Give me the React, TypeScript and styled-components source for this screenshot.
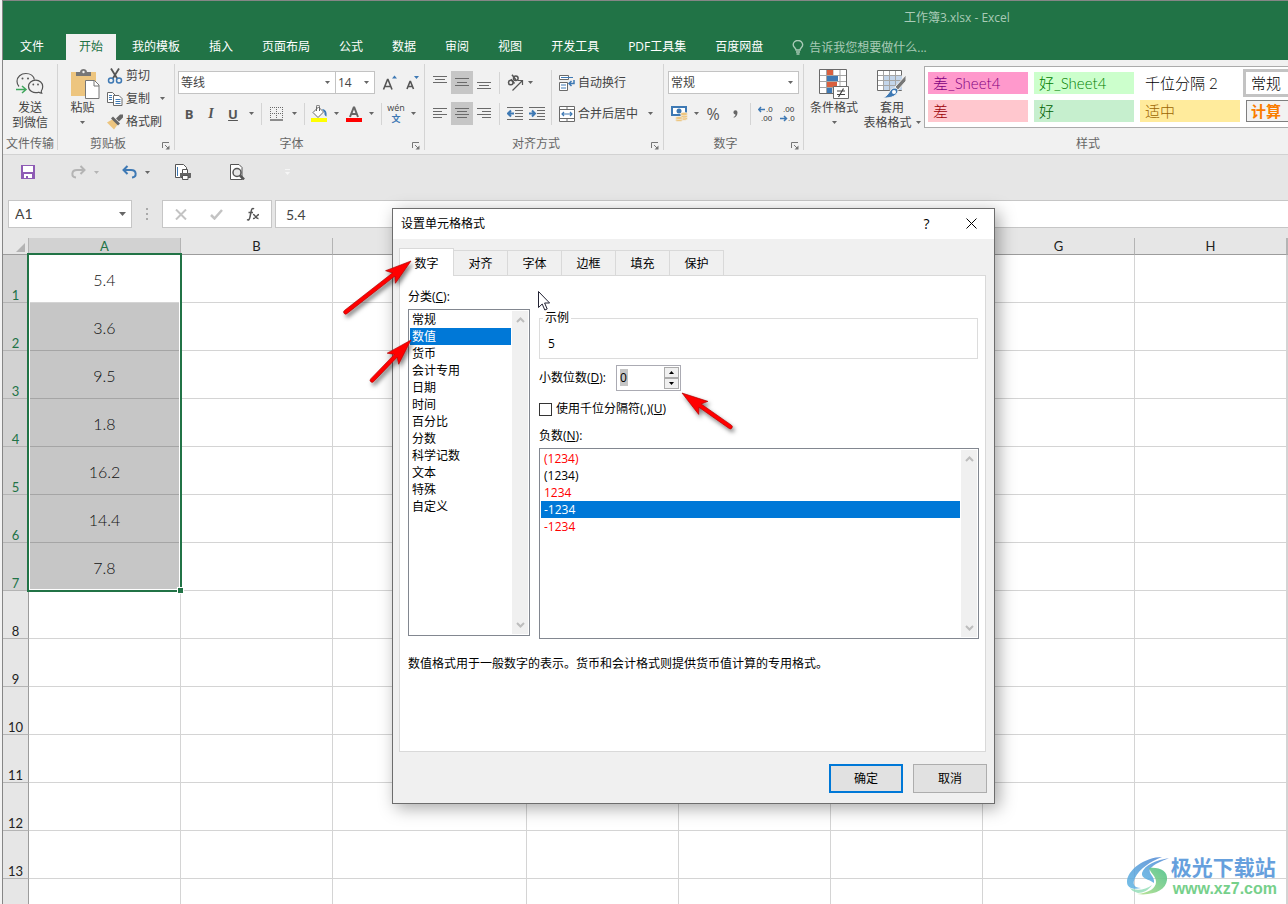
import React from 'react';
import styled, { createGlobalStyle, css } from 'styled-components';

const ui = '"Open Sans", "Noto Sans CJK SC", sans-serif';
const sheet = 'Lato, "Noto Sans CJK SC", sans-serif';
const GREEN = '#217346';
const GREY = '#6a6a6a';
const BLUE = '#3e79b4';

const GlobalStyle = createGlobalStyle`
  *, *::before, *::after { box-sizing: border-box; }
  html, body { margin: 0; background: #f3f3f3; }
  body { font: 12px/18px ${ui}; color: #444; overflow: hidden; }
  button, input, select { font: inherit; color: inherit; margin: 0; padding: 0; border: 0; border-radius: 0; background: none; outline: none; }
  svg { display: block; flex: none; }
`;

/* ---------- window ---------- */

const Window = styled.div`
  position: relative;
  display: flex;
  flex-direction: column;
  height: 100vh;
  margin-left: 2px;
  border-left: 1px solid #868686;
  overflow: hidden;
  background: #fff;
`;

const TitleBar = styled.header`
  flex: none;
  border-top: 1px solid #868686;
  background: ${GREEN};
  color: #fff;
`;

const Title = styled.div`
  height: 33px;
  padding-left: 901px;
  line-height: 33px;
  color: #a9cbb7;
  white-space: nowrap;
`;

const TabBar = styled.nav`
  display: flex;
  gap: 3px;
  height: 26px;
  white-space: nowrap;
`;

const RibbonTab = styled.button<{ $active?: boolean; $file?: boolean }>`
  flex: none;
  padding: 0 13px;
  line-height: 22px;
  ${p => p.$file && css`width: 58px; margin-right: 2px;`}
  ${p => p.$active && css`background: #f1f1f1; color: ${GREEN};`}
`;

const TellMe = styled.label`
  display: flex;
  align-items: center;
  gap: 5px;
  padding-left: 13px;
  color: #a9cbb7;
  input { width: 200px; height: 24px; }
  input::placeholder { color: #a9cbb7; opacity: 1; }
`;

/* ---------- ribbon ---------- */

const Ribbon = styled.section`
  display: flex;
  flex: none;
  padding: 4px 0;
  border-bottom: 1px solid #d2d2d2;
  background: #f1f1f1;
  overflow: hidden;
`;

const Group = styled.div<{ $width: number; $last?: boolean }>`
  display: flex;
  flex-direction: column;
  flex: none;
  width: ${p => p.$width}px;
  border-right: ${p => (p.$last ? 0 : 1)}px solid #d4d4d4;
  white-space: nowrap;
`;

const GroupBody = styled.div`
  display: flex;
  height: 74px;
`;

const GroupFoot = styled.div`
  display: flex;
  height: 12px;
  line-height: 12px;
  color: #666;
  text-align: center;
  span { flex: 1; }
`;

const Launcher = styled.button`
  width: 16px;
  height: 12px;
  padding: 4px 0 0 4px;
`;

const BigButton = styled.button<{ $width: number }>`
  display: flex;
  flex-direction: column;
  align-items: center;
  flex: none;
  width: ${p => p.$width}px;
  padding-top: 4px;
  line-height: 15px;
`;

const BigIcon = styled.span`
  display: flex;
  align-items: center;
  justify-content: center;
  height: 32px;
`;

const CaretLine = styled.span`
  display: flex;
  align-items: center;
  gap: 4px;
  height: 15px;
`;

const Stack = styled.div`
  display: flex;
  flex-direction: column;
`;

const Rows = styled.div<{ $left?: number }>`
  display: flex;
  flex-direction: column;
  gap: 8px;
  padding: 7px 0 0 ${p => p.$left ?? 3}px;
`;

const Row = styled.div`
  display: flex;
  align-items: center;
  height: 23px;
`;

const ToolButton = styled.button<{ $on?: boolean }>`
  display: flex;
  align-items: center;
  justify-content: center;
  width: 22px;
  height: 23px;
  background: ${p => (p.$on ? '#c6c6c6' : 'none')};
`;

const Glyph = styled.span<{ $kind?: 'bold' | 'italic' | 'underline' | 'big' }>`
  font-size: 13px;
  color: #555;
  ${p => p.$kind === 'bold' && css`font-weight: 700;`}
  ${p => p.$kind === 'italic' && css`font: italic 700 14px "Liberation Serif", serif;`}
  ${p => p.$kind === 'underline' && css`font-weight: 700; text-decoration: underline;`}
  ${p => p.$kind === 'big' && css`font-size: 16px;`}
`;

const CaretButton = styled.button<{ $width?: number }>`
  display: flex;
  align-items: center;
  justify-content: center;
  width: ${p => p.$width ?? 14}px;
  height: 23px;
`;

const TextButton = styled.button`
  display: flex;
  align-items: center;
  gap: 3px;
  height: 23px;
`;

const Sep = styled.span<{ $margin?: number; $tall?: boolean }>`
  flex: none;
  width: 1px;
  height: ${p => (p.$tall ? '55px' : '22px')};
  margin: ${p => (p.$tall ? '6px' : 0)} ${p => p.$margin ?? 3}px 0;
  background: #d4d4d4;
`;

const SelectBox = styled.label<{ $width: number }>`
  display: flex;
  align-items: center;
  width: ${p => p.$width}px;
  height: 23px;
  padding: 0 5px 0 2px;
  border: 1px solid #c3c3c3;
  background: #fff;
  & + & { margin: 0 3px 0 -1px; }
  select { flex: 1; min-width: 0; appearance: none; }
`;

const Gallery = styled.div`
  display: grid;
  grid-template-columns: repeat(4, 100px);
  grid-auto-rows: 22px;
  gap: 6px;
  align-self: flex-start;
  margin: 2px 0 0 4px;
  padding: 5px 3px 5px;
  border: 1px solid #ababab;
  background: #fff;
`;

const StyleCell = styled.button<{ $bg: string; $fg: string; $picked?: boolean; $calc?: boolean }>`
  padding: 0 5px;
  font: 300 15px/20px ${sheet};
  text-align: left;
  background: ${p => p.$bg};
  color: ${p => p.$fg};
  ${p => p.$picked && css`outline: 3px solid #c3c3c3;`}
  ${p => p.$calc && css`border: 1px solid #7f7f7f; padding: 0 4px; font-weight: 700; line-height: 18px;`}
`;

/* ---------- quick access and formula bar ---------- */

const Bars = styled.section`
  flex: none;
  background: #e6e6e6;
`;

const QuickBar = styled.div`
  display: flex;
  align-items: center;
  height: 34px;
  padding-left: 12px;
`;

const QuickButton = styled.button<{ $gap?: number }>`
  display: flex;
  align-items: center;
  justify-content: center;
  width: 26px;
  height: 24px;
  margin-left: ${p => p.$gap ?? 0}px;
`;

const FormulaBar = styled.div`
  display: flex;
  padding: 11px 0 10px 5px;
  font: 14px/26px ${sheet};
`;

const NameBox = styled.label`
  display: flex;
  align-items: center;
  width: 124px;
  height: 28px;
  padding: 0 5px 0 6px;
  border: 1px solid #c6c6c6;
  background: #fff;
  input { flex: 1; min-width: 0; }
`;

const Dots = styled.span`
  display: flex;
  align-items: center;
  justify-content: center;
  width: 30px;
`;

const FormulaTools = styled.div`
  display: flex;
  align-items: center;
  justify-content: space-around;
  width: 110px;
  height: 28px;
  border: 1px solid #c6c6c6;
  background: #fff;
`;

const FormulaInput = styled.input`
  flex: 1;
  height: 28px;
  margin-left: 3px !important;
  padding: 0 10px !important;
  border: 1px solid #c6c6c6 !important;
  border-right: 0 !important;
  background: #fff !important;
`;

/* ---------- sheet ---------- */

const SheetArea = styled.main`
  position: relative;
  flex: 1;
  min-height: 0;
  margin-top: -1px;
  padding-top: 1px;
  overflow: hidden;
`;

const Table = styled.table`
  width: 100%;
  table-layout: fixed;
  border-collapse: separate;
  border-spacing: 0;
  font-family: ${sheet};
  color: #111;
  th, td { padding: 0; }
  th { font-weight: 400; font-size: 13px; }
`;

const ColHead = styled.th<{ $on?: boolean }>`
  height: 17px;
  line-height: 16px;
  border-right: 1px solid #b4b4b4;
  border-bottom: 1px solid #9c9c9c;
  background: ${p => (p.$on ? '#d2d2d2' : '#e6e6e6')};
  color: ${p => (p.$on ? GREEN : '#222')};
`;

const Corner = styled(ColHead)`
  svg { margin: 3px 0 0 13px; }
`;

const RowHead = styled.th<{ $on?: boolean }>`
  height: 48px;
  vertical-align: bottom;
  line-height: 13px;
  border-right: 1px solid #9c9c9c;
  border-bottom: 1px solid #b4b4b4;
  background: ${p => (p.$on ? '#d2d2d2' : '#e6e6e6')};
  color: ${p => (p.$on ? GREEN : '#222')};
`;

const Cell = styled.td<{ $on?: boolean }>`
  && { padding-top: 2px; }
  height: 48px;
  border-right: 1px solid #d4d4d4;
  border-bottom: 1px solid ${p => (p.$on ? '#a5a5a5' : '#d4d4d4')};
  background: ${p => (p.$on ? '#c6c6c6' : '#fff')};
  font-size: 16px;
  font-weight: 300;
  text-align: center;
`;

const Selection = styled.div`
  position: absolute;
  left: 24px;
  top: 16px;
  width: 155px;
  height: 339px;
  border: 2px solid ${GREEN};
  box-shadow: inset 0 0 0 1px #fff;
  &::after {
    content: '';
    position: absolute;
    right: -4px;
    bottom: -4px;
    width: 7px;
    height: 7px;
    border: 1px solid #fff;
    background: ${GREEN};
  }
`;

/* ---------- dialog ---------- */

const Dialog = styled.section`
  position: absolute;
  left: 389px;
  top: 208px;
  width: 603px;
  border: 1px solid #6d6d6d;
  background: #f0f0f0;
  box-shadow: 4px 4px 16px rgba(0, 0, 0, 0.35);
  color: #000;
`;

const DialogTitle = styled.div`
  display: flex;
  height: 30px;
  padding-left: 8px;
  line-height: 30px;
  background: #fff;
  h1 { flex: 1; margin: 0; font: inherit; }
`;

const TitleButton = styled.button`
  display: flex;
  align-items: center;
  justify-content: center;
  width: 45px;
  height: 29px;
  font-size: 14px;
`;

const DialogTabs = styled.div`
  display: flex;
  align-items: flex-end;
  padding: 9px 6px 0;
`;

const DialogTab = styled.button<{ $active?: boolean }>`
  width: 54px;
  height: 25px;
  padding-top: 2px;
  border: solid #d9d9d9;
  border-width: 1px 1px 0 0;
  ${p => p.$active && css`
    position: relative;
    z-index: 1;
    width: 55px;
    height: 28px;
    margin-bottom: -1px;
    border-left-width: 1px;
    background: #fff;
  `}
`;

const Panel = styled.div`
  min-height: 477px;
  margin: 0 8px 0 6px;
  padding: 12px 6px 12px 8px;
  border: 1px solid #d9d9d9;
  background: #fff;
`;

const Columns = styled.div`
  display: flex;
  gap: 9px;
`;

const CategoryColumn = styled.div`
  width: 122px;
`;

const DetailColumn = styled.div`
  flex: 1;
  padding-top: 21px;
`;

const Caption = styled.div`
  margin-bottom: 3px;
`;

const ListFrame = styled.div<{ $height: number }>`
  display: flex;
  height: ${p => p.$height}px;
  padding: 1px;
  border: 1px solid #828790;
`;

const List = styled.ul`
  flex: 1;
  margin: 0 1px 0 0;
  padding: 0;
  list-style: none;
`;

const Option = styled.li<{ $on?: boolean; $red?: boolean; $wide?: boolean }>`
  height: 17px;
  padding-left: ${p => (p.$wide ? 3 : 2)}px;
  line-height: 17px;
  background: ${p => (p.$on ? '#0078d7' : 'none')};
  color: ${p => (p.$on ? '#fff' : p.$red ? '#f00' : '#000')};
`;

const Track = styled.div`
  display: flex;
  flex-direction: column;
  justify-content: space-between;
  align-items: center;
  width: 16px;
  padding: 6px 0;
  background: #f0f0f0;
`;

const Sample = styled.fieldset`
  height: 50px;
  margin: 0 1px 0 0;
  padding: 8px 0 0 3px;
  border: 1px solid #dcdcdc;
  legend { height: 18px; padding: 0 2px; }
  output { display: block; padding-left: 5px; }
`;

const Places = styled.div`
  display: flex;
  align-items: center;
  gap: 10px;
  height: 26px;
  margin-top: 6px;
`;

const Spinner = styled.span`
  display: flex;
  width: 65px;
  height: 26px;
  padding: 1px;
  border: 1px solid #ababb3;
`;

const SpinValue = styled.input`
  width: 8px;
  height: 17px;
  margin: 2px 36px 0 2px !important;
  background: #c6c6c6 !important;
`;

const SpinButtons = styled.span`
  display: flex;
  flex-direction: column;
  width: 15px;
  button {
    display: flex;
    align-items: center;
    justify-content: center;
    width: 15px;
    height: 11px;
    border: 1px solid #ababab;
    background: #f0f0f0;
  }
`;

const CheckLine = styled.label`
  display: flex;
  align-items: center;
  gap: 4px;
  height: 18px;
  margin: 9px 0;
  input { appearance: none; width: 13px; height: 13px; border: 1px solid #333; background: #fff; }
`;

const Note = styled.p`
  margin: 16px 0 0;
`;

const Actions = styled.div`
  display: flex;
  justify-content: flex-end;
  gap: 10px;
  padding: 12px 7px 10px;
`;

const ActionButton = styled.button<{ $primary?: boolean }>`
  width: 74px;
  height: 29px;
  border: ${p => (p.$primary ? '2px solid #0078d7' : '1px solid #adadad')};
  background: #e1e1e1;
`;

/* ---------- overlays ---------- */

const Annotations = styled.svg`
  position: absolute;
  z-index: 2;
  left: 337px;
  top: 240px;
  pointer-events: none;
`;

const Watermark = styled.div`
  position: absolute;
  right: 11px;
  bottom: 6px;
  display: flex;
  align-items: center;
  gap: 1px;
`;

const MarkName = styled.div`
  font: 700 21px/25px "Noto Sans CJK SC", sans-serif;
  color: #66a0dd;
`;

const MarkUrl = styled.div`
  padding-left: 2px;
  font: 700 16px/19px "Liberation Sans", sans-serif;
  color: #76d08b;
`;

/* ---------- icons ---------- */

const Caret = ({ color = '#666', big = false }: { color?: string; big?: boolean }) => (
  <svg width={big ? 7 : 5} height={big ? 4 : 3} viewBox="0 0 5 3" preserveAspectRatio="none"><path d="M0 0h5L2.500 3z" fill={color} /></svg>
);

const Chevron = ({ down }: { down?: boolean }) => (
  <svg width="9" height="6" viewBox="0 0 9 6" fill="none" stroke="#bdbdbd" strokeWidth="2">
    <path d={down ? 'M1 1l3.500 3.500L8 1' : 'M1 5l3.500-3.500L8 5'} />
  </svg>
);

const LaunchIcon = () => (
  <svg width="8" height="8" viewBox="0 0 8 8" fill="none" stroke="#777">
    <path d="M.5 6V.5H7M3 3l3 3" /><path d="M7.500 3.500v4h-4z" fill="#777" stroke="none" />
  </svg>
);

const BulbIcon = () => (
  <svg width="12" height="15" viewBox="0 0 12 15" fill="none" stroke="#a9cbb7" strokeWidth="1.400">
    <path d="M4 10c0-2-2.800-2.600-2.800-5.200a4.700 4.300 0 0 1 9.500 0C10.700 7.400 8 8 8 10zM4 12h4M4.500 14h3" />
  </svg>
);

const WeChatIcon = () => (
  <svg width="28" height="24" viewBox="0 0 28 24" fill="none" stroke="#555" strokeWidth="1.200">
    <path d="M3 14.500C1.600 13 1 11.300 1 9.300 1 4.700 5 1.500 9.800 1.500c4.600 0 8 2.700 8.600 6.200" />
    <path d="M25.500 18.500c-.4.600-.3 1.500.2 2.700-1.400-.2-2.200-.6-2.900-1-5.400 1.700-10.300-1.400-10.300-5.700 0-3.700 3.200-6.300 7.200-6.300s7 2.700 7 6.200c0 1.600-.4 3-1.200 4.100z" />
    <g fill="#555" stroke="none"><circle cx="6.500" cy="6.500" r="1" /><circle cx="12" cy="6.500" r="1" /><circle cx="17.300" cy="12.500" r=".9" /><circle cx="22" cy="12.500" r=".9" /></g>
    <path d="M0 17.500h9M6 14l4 3.500L6 21" stroke="#3fa65c" strokeWidth="1.500" />
  </svg>
);

const PasteIcon = () => (
  <svg width="34" height="30" viewBox="-5 0 34 30">
    <path d="M0 3h25v24H0z" fill="#edc57f" />
    <path d="M5 7V3h4c0-4 7-4 7 0h4v4z" fill="#777" /><circle cx="12.500" cy="3" r="1.200" fill="#f1f1f1" />
    <path d="M14.500 11.500h9l4.500 4.500v13.500H14.500z" fill="#fff" stroke="#777" />
    <path d="M23 11.500V17h5" fill="none" stroke="#777" />
  </svg>
);

const CutIcon = () => (
  <svg width="16" height="16" viewBox="0 0 16 16" fill="none">
    <path d="M4 .5 10.500 11M12 .5 5.500 11" stroke="#555" strokeWidth="1.800" />
    <circle cx="4" cy="12.500" r="2.500" stroke={BLUE} strokeWidth="1.500" /><circle cx="12" cy="12.500" r="2.500" stroke={BLUE} strokeWidth="1.500" />
  </svg>
);

const CopyIcon = () => (
  <svg width="16" height="16" viewBox="0 0 16 16" fill="#fff" stroke={GREY}>
    <path d="M.5 1.500h5L8.500 4.500v7h-8z" /><path d="M2 4.500h3M2 6.500h3M2 8.500h3" stroke={BLUE} />
    <path d="M6.500 4.500h5.500l3 3v7h-8.500z" /><path d="M8.500 8.500h5M8.500 10.500h5M8.500 12.500h5" stroke={BLUE} />
  </svg>
);

const BrushIcon = () => (
  <svg width="16" height="16" viewBox="0 0 16 16">
    <path d="M0 8.500 6 5l5 5-4 5.500z" fill="#edc57f" />
    <path d="M6 2.500l7 7-2 2-7-7z" fill="#666" /><path d="M9 4.500 13 .5h3v3l-4 4z" fill="#666" />
  </svg>
);

const GrowIcon = ({ small }: { small?: boolean }) => (
  <svg width="15" height="16" viewBox="0 0 15 16">
    <path d={small ? 'M3 14 6 6.500h.5L9.500 14M4.200 11.500h4' : 'M1.500 14.500 5.500 4.500h.5l4 10M3 11.500h5.500'} fill="none" stroke="#555" strokeWidth="1.600" />
    <path d={small ? 'M10 1h5l-2.500 3z' : 'M10 3.500h5L12.500.5z'} fill={BLUE} />
  </svg>
);

const BorderIcon = () => (
  <svg width="13" height="14" viewBox="0 0 13 14" fill="none" stroke={GREY}>
    <path d="M0 .5h13M0 6.500h13M.5 0v12M6.500 0v12M12.500 0v12" strokeDasharray="1 1" /><path d="M0 13h13" strokeWidth="1.500" />
  </svg>
);

const FillIcon = () => (
  <svg width="16" height="17" viewBox="0 0 16 17">
    <path d="M2 7.500 7.500 2l5 5L7 12.500z" fill="#fff" stroke={GREY} /><path d="M5.500 6V1.500a1.500 1.500 0 0 1 3 0V6" fill="none" stroke={GREY} />
    <path d="M11 4c4 .5 5 3 4.500 7.500-1.500-.5-2.500-2-2-4z" fill={BLUE} /><path d="M0 13h16v4H0z" fill="#ff0" />
  </svg>
);

const FontColorIcon = () => (
  <svg width="16" height="17" viewBox="0 0 16 17">
    <path d="M4 12 7.700 2.500h.6L12 12M5.500 9h5" fill="none" stroke="#666" strokeWidth="2" /><path d="M0 13h16v4H0z" fill="red" />
  </svg>
);

const Pinyin = styled.span`
  display: flex;
  flex-direction: column;
  align-items: center;
  font: 9px/10px ${ui};
  color: #444;
  b { font: 700 9px/11px "Noto Sans CJK SC", sans-serif; color: ${BLUE}; }
`;

const Lines = ({ d }: { d: string }) => (
  <svg width="14" height="13" viewBox="0 0 14 13" stroke={GREY} fill="none"><path d={d} /></svg>
);

const IndentIcon = ({ right }: { right?: boolean }) => (
  <svg width="16" height="13" viewBox="0 0 16 13" fill="none" stroke={GREY}>
    <path d="M0 .5h16M8 3.500h8M8 6.500h8M8 9.500h8M0 12.500h16" />
    <path d={right ? 'M0 6.500h5M3 3.500l3 3-3 3' : 'M7 6.500H2M4 3.500l-3 3 3 3'} stroke={BLUE} strokeWidth="2" />
  </svg>
);

const OrientIcon = () => (
  <svg width="17" height="17" viewBox="0 0 17 17" fill="none" stroke="#555" strokeWidth="1.500">
    <circle cx="3.800" cy="8.500" r="2.300" /><path d="M4 5.200 7.500 9.500" />
    <path d="M5 .8 9 6" /><circle cx="8.800" cy="4.200" r="2.300" /><path d="M5.500 16.500 15 7M11 6.500h4.500V11" strokeWidth="1.200" />
  </svg>
);

const WrapIcon = () => (
  <svg width="16" height="16" viewBox="0 0 16 16" fill="none" stroke={GREY}>
    <path d="M.5.5h9v4H.5zM.5 7.500h8v8H.5z" fill="#fff" /><path d="M2 2.500h12M2 10h5M2 13h5" stroke={BLUE} />
    <path d="M15 5v3.500h-4M12.500 6l-2.500 2.500 2.500 2.500" stroke={BLUE} strokeWidth="1.500" />
  </svg>
);

const MergeIcon = () => (
  <svg width="16" height="16" viewBox="0 0 16 16" fill="none" stroke={GREY}>
    <path d="M.5.500h15v15H.5zM.5 3.500h15M.5 12.500h15M8 .5v3M8 12.500v3" fill="#fff" />
    <path d="M3 8h10M5 6 3 8l2 2M11 6l2 2-2 2" stroke={BLUE} strokeWidth="1.200" />
  </svg>
);

const MoneyIcon = () => (
  <svg width="17" height="16" viewBox="0 0 17 16">
    <path d="M1 1h14v8H1z" fill="#fff" stroke={BLUE} strokeWidth="2" /><circle cx="8" cy="5" r="2.500" fill={BLUE} />
    <g fill="#edc57f" stroke="#f1f1f1" strokeWidth=".6"><ellipse cx="13" cy="12.500" rx="3.500" ry="1.800" /><ellipse cx="13" cy="10.300" rx="3.500" ry="1.800" /><ellipse cx="13" cy="8" rx="3.500" ry="1.800" /><ellipse cx="8" cy="14" rx="3.500" ry="1.600" /><ellipse cx="8" cy="12" rx="3.500" ry="1.600" /></g>
  </svg>
);

const DecimalIcon = ({ less }: { less?: boolean }) => (
  <svg width="16" height="20" viewBox="0 0 16 20" fontFamily="Liberation Sans, sans-serif" fontSize="8" fill="#333">
    <text x={less ? 3 : 8} y="8">{less ? '.00' : '.0'}</text><text x={less ? 8 : 3} y="17">{less ? '.0' : '.00'}</text>
    <path d={less ? 'M0 14.500h6M4 12l2.500 2.500L4 17' : 'M7 5.500H1M3 3 .7 5.500 3 8'} fill="none" stroke={BLUE} strokeWidth="1.500" />
  </svg>
);

const CondIcon = () => (
  <svg width="31" height="31" viewBox="0 0 31 31">
    <path d="M.5.5h27v24H.5z" fill="#fff" stroke={GREY} />
    <path d="M7.500 1v23M14 1v23M21 1v23M1 6.500h26M1 12.500h26M1 18.500h26" stroke="#a5a5a5" />
    <path d="M8 1h6v5H8zM8 13h10v5H8z" fill="#d9603f" /><path d="M8 7h11v5H8zM8 19h5v5H8z" fill={BLUE} />
    <path d="M14.500 17.500h15v12h-15z" fill="#fff" stroke={GREY} /><path d="M18 22h8M18 25.500h8M24.500 19.500l-5 8.500" stroke="#444" strokeWidth="1.200" />
  </svg>
);

const TableIcon = () => (
  <svg width="30" height="29" viewBox="0 0 30 29">
    <path d="M.5.5h24v20H.5z" fill="#fff" stroke={GREY} /><path d="M7 6h18v14H7z" fill="#c3d5ea" />
    <path d="M6.500 1v19M12.500 1v19M18.500 1v19M1 5.500h24M1 10.500h24M1 15.500h24" stroke="#a5a5a5" />
    <path d="M29 5v6l-8 9-3-3z" fill="#777" stroke="#f1f1f1" /><path d="M18 18c3 0 4 3 1.500 6C16 28 10 28 6 28c4-2 5-4 7-7 1-2 3-3 5-3z" fill={BLUE} stroke="#f1f1f1" />
    <circle cx="17" cy="22" r="2" fill="#fff" />
  </svg>
);

const SaveIcon = () => (
  <svg width="14" height="14" viewBox="0 0 14 14"><path d="M0 0h14v14H0z" fill="#8e5bb5" /><path d="M2 1h10v6H2zM3 9h8v4H3z" fill="#fff" /><path d="M5 11h2v3H5z" fill="#8e5bb5" /></svg>
);

const UndoIcon = ({ redo }: { redo?: boolean }) => (
  <svg width="15" height="14" viewBox="0 0 15 14" fill="none" stroke={redo ? '#b4b4b4' : BLUE} strokeWidth="2">
    <path d={redo ? 'M14 5H6C0 5 0 12 5 12.500M9.500 1l4 4-4 4' : 'M1 5h8c6 0 6 7 1 7.500M5.500 1l-4 4 4 4'} />
  </svg>
);

const PrintIcon = () => (
  <svg width="17" height="16" viewBox="0 0 17 16" fill="none" stroke="#555">
    <path d="M5 13.500H.5V.5h8l3 3V5" fill="#fff" /><path d="M2.500 3v9" stroke={BLUE} />
    <path d="M7.500 9V5.500h5V9M5.500 9.500h10v4h-10z" fill="#fff" /><path d="M5 9h11v4H5z" fill="#666" stroke="none" /><path d="M7.500 11.500h5.500v4H7.500z" fill="#fff" />
  </svg>
);

const PreviewIcon = () => (
  <svg width="15" height="16" viewBox="0 0 15 16" fill="none" stroke="#555">
    <path d="M.5.5h8.500l3 3v12H.5z" fill="#fff" /><circle cx="7" cy="8.500" r="4" fill="#e6e6e6" strokeWidth="1.500" /><path d="m10 11.500 4 4" strokeWidth="2.500" />
  </svg>
);

const SwirlIcon = () => (
  <svg width="43" height="40" viewBox="0 0 43 40">
    <defs>
      <linearGradient id="swirl" x1="0" y1="1" x2="1" y2="0"><stop offset="0" stopColor="#5cb4e2" /><stop offset="1" stopColor="#4f86d2" /></linearGradient>
      <linearGradient id="leaf" x1="0" y1="1" x2="1" y2="0"><stop offset="0" stopColor="#b4e08a" /><stop offset="1" stopColor="#4cc08a" /></linearGradient>
    </defs>
    <path d="M35 1C18 1 0 14 0 26c0 6 6 8 14 6-7 0-9-4-6-10C12 13 24 5 35 1z" fill="url(#swirl)" opacity=".85" />
    <path d="M42 2C30 4 17 9 15 17c-1 6 7 6 12 10 1-7-6-9-4-14C27 8 35 5 42 2z" fill="url(#swirl)" opacity=".85" />
    <path d="M22 12c11-1 19 3 18 12-1 10-14 16-30 14 12-1 19-6 19-12S24 18 22 12z" fill="url(#leaf)" opacity=".9" />
    <path d="M3 32c6 3 16 2 22-3-3 5-9 8-14 8-4-1-7-3-8-5z" fill="#8fdcb4" opacity=".8" />
  </svg>
);

/* ---------- data ---------- */

const ribbonTabs = ['开始', '我的模板', '插入', '页面布局', '公式', '数据', '审阅', '视图', '开发工具', 'PDF工具集', '百度网盘'];
const values = ['5.4', '3.6', '9.5', '1.8', '16.2', '14.4', '7.8'];
const columns = [['A', 152], ['B', 152], ['C', 194], ['D', 152], ['E', 152], ['F', 152], ['G', 152], ['H', 152]] as const;
const rowLabels = ['1', '2', '3', '4', '5', '6', '7', '8', '9', '10', '11', '12', '13', ''];
const categories = ['常规', '数值', '货币', '会计专用', '日期', '时间', '百分比', '分数', '科学记数', '文本', '特殊', '自定义'];
const negatives = [
  { text: '(1234)', red: true }, { text: '(1234)' }, { text: '1234', red: true }, { text: '-1234', on: true }, { text: '-1234', red: true },
];
const styles = [
  { name: '差_Sheet4', bg: '#ff99cc', fg: '#800080' }, { name: '好_Sheet4', bg: '#ccffcc', fg: '#008000' },
  { name: '千位分隔 2', bg: '#fff', fg: '#000' }, { name: '常规', bg: '#fff', fg: '#000', picked: true },
  { name: '差', bg: '#ffc7ce', fg: '#9c0006' }, { name: '好', bg: '#c6efce', fg: '#006100' },
  { name: '适中', bg: '#ffeb9c', fg: '#9c6500' }, { name: '计算', bg: '#f2f2f2', fg: '#fa7d00', calc: true },
];

const Foot = ({ label, launch = true }: { label: string; launch?: boolean }) => (
  <GroupFoot><span>{label}</span>{launch && <Launcher aria-label={label}><LaunchIcon /></Launcher>}</GroupFoot>
);

const RibbonGroups = () => (
  <Ribbon>
    <Group $width={55}>
      <GroupBody><BigButton $width={54}><BigIcon><WeChatIcon /></BigIcon><span>发送</span><span>到微信</span></BigButton></GroupBody>
      <Foot label="文件传输" launch={false} />
    </Group>

    <Group $width={117}>
      <GroupBody>
        <BigButton $width={49}><BigIcon><PasteIcon /></BigIcon><span>粘贴</span><CaretLine><Caret /></CaretLine></BigButton>
        <Stack>
          <TextButton><CutIcon />剪切</TextButton>
          <Row><TextButton><CopyIcon />复制</TextButton><CaretButton $width={24} aria-label="复制选项"><Caret /></CaretButton></Row>
          <TextButton><BrushIcon />格式刷</TextButton>
        </Stack>
      </GroupBody>
      <Foot label="剪贴板" />
    </Group>

    <Group $width={250}>
      <GroupBody>
        <Rows>
          <Row>
            <SelectBox $width={158}><select aria-label="字体"><option>等线</option></select><Caret /></SelectBox>
            <SelectBox $width={40}><select aria-label="字号"><option>14</option></select><Caret /></SelectBox>
            <ToolButton aria-label="增大字号"><GrowIcon /></ToolButton>
            <ToolButton aria-label="减小字号"><GrowIcon small /></ToolButton>
          </Row>
          <Row>
            <ToolButton><Glyph $kind="bold">B</Glyph></ToolButton>
            <ToolButton><Glyph $kind="italic">I</Glyph></ToolButton>
            <ToolButton><Glyph $kind="underline">U</Glyph></ToolButton>
            <CaretButton aria-label="下划线选项"><Caret /></CaretButton>
            <Sep />
            <ToolButton aria-label="边框"><BorderIcon /></ToolButton>
            <CaretButton aria-label="边框选项"><Caret /></CaretButton>
            <Sep />
            <ToolButton aria-label="填充颜色"><FillIcon /></ToolButton>
            <CaretButton $width={13} aria-label="填充选项"><Caret /></CaretButton>
            <ToolButton aria-label="字体颜色"><FontColorIcon /></ToolButton>
            <CaretButton $width={13} aria-label="颜色选项"><Caret /></CaretButton>
            <Sep />
            <ToolButton><Pinyin>wén<b>文</b></Pinyin></ToolButton>
            <CaretButton $width={13} aria-label="拼音选项"><Caret /></CaretButton>
          </Row>
        </Rows>
      </GroupBody>
      <Foot label="字体" />
    </Group>

    <Group $width={239}>
      <GroupBody>
        <Rows $left={4}>
          <Row>
            <ToolButton aria-label="顶端对齐"><Lines d="M0 .5h14M2 3.500h10M0 6.500h14" /></ToolButton>
            <ToolButton $on aria-label="垂直居中"><Lines d="M0 2.500h14M2 6.500h10M0 9.500h14" /></ToolButton>
            <ToolButton aria-label="底端对齐"><Lines d="M0 6.500h14M2 9.500h10M0 12.500h14" /></ToolButton>
            <Sep $margin={4} />
            <ToolButton aria-label="方向"><OrientIcon /></ToolButton>
            <CaretButton $width={8} aria-label="方向选项"><Caret /></CaretButton>
          </Row>
          <Row>
            <ToolButton aria-label="左对齐"><Lines d="M0 1.500h14M0 4.500h9M0 7.500h14M0 10.500h9" /></ToolButton>
            <ToolButton $on aria-label="居中"><Lines d="M0 1.500h14M2 4.500h10M0 7.500h14M2 10.500h10" /></ToolButton>
            <ToolButton aria-label="右对齐"><Lines d="M0 1.500h14M5 4.500h9M0 7.500h14M5 10.500h9" /></ToolButton>
            <Sep $margin={4} />
            <ToolButton aria-label="减少缩进量"><IndentIcon /></ToolButton>
            <ToolButton aria-label="增加缩进量"><IndentIcon right /></ToolButton>
          </Row>
        </Rows>
        <Sep $tall $margin={3} />
        <Rows $left={4}>
          <TextButton><WrapIcon />自动换行</TextButton>
          <Row><TextButton><MergeIcon />合并后居中</TextButton><CaretButton $width={24} aria-label="合并选项"><Caret /></CaretButton></Row>
        </Rows>
      </GroupBody>
      <Foot label="对齐方式" />
    </Group>

    <Group $width={140}>
      <GroupBody>
        <Rows $left={4}>
          <SelectBox $width={131}><select aria-label="数字格式"><option>常规</option></select><Caret /></SelectBox>
          <Row>
            <ToolButton aria-label="会计数字格式"><MoneyIcon /></ToolButton>
            <CaretButton $width={12} aria-label="会计选项"><Caret /></CaretButton>
            <ToolButton><Glyph $kind="big">%</Glyph></ToolButton>
            <ToolButton aria-label="千位分隔样式"><svg width="5" height="8" viewBox="0 0 6 9"><path d="M.5 2.500a2.400 2.400 0 0 1 4.900 0C5.400 6 4 8 1 9l-.3-1C2.300 7.200 3 6.300 3 5 1.500 5 .5 4 .5 2.500z" fill="#666" /></svg></ToolButton>
            <Sep $margin={4} />
            <ToolButton aria-label="增加小数位数"><DecimalIcon /></ToolButton>
            <ToolButton aria-label="减少小数位数"><DecimalIcon less /></ToolButton>
          </Row>
        </Rows>
      </GroupBody>
      <Foot label="数字" />
    </Group>

    <Group $width={568} $last>
      <GroupBody>
        <BigButton $width={60}><BigIcon><CondIcon /></BigIcon><span>条件格式</span><CaretLine><Caret /></CaretLine></BigButton>
        <BigButton $width={56}><BigIcon><TableIcon /></BigIcon><span>套用</span><CaretLine>表格格式<Caret /></CaretLine></BigButton>
        <Gallery>
          {styles.map(s => <StyleCell key={s.name} $bg={s.bg} $fg={s.fg} $picked={s.picked} $calc={s.calc}>{s.name}</StyleCell>)}
        </Gallery>
      </GroupBody>
      <Foot label="样式" launch={false} />
    </Group>
  </Ribbon>
);

const FormatDialog = () => (
  <Dialog role="dialog" aria-labelledby="dialog-title">
    <DialogTitle>
      <h1 id="dialog-title">设置单元格格式</h1>
      <TitleButton>?</TitleButton>
      <TitleButton aria-label="关闭"><svg width="11" height="11" viewBox="0 0 11 11" stroke="#000"><path d="M.5.5l10 10M10.500.5l-10 10" /></svg></TitleButton>
    </DialogTitle>
    <DialogTabs role="tablist">
      {['数字', '对齐', '字体', '边框', '填充', '保护'].map((t, i) => <DialogTab key={t} role="tab" $active={i === 0} aria-selected={i === 0}>{t}</DialogTab>)}
    </DialogTabs>
    <Panel>
      <Columns>
        <CategoryColumn>
          <Caption id="category-label">分类(<u>C</u>):</Caption>
          <ListFrame $height={327}>
            <List role="listbox" aria-labelledby="category-label">
              {categories.map(c => <Option key={c} role="option" $on={c === '数值'} aria-selected={c === '数值'}>{c}</Option>)}
            </List>
            <Track><Chevron /><Chevron down /></Track>
          </ListFrame>
        </CategoryColumn>
        <DetailColumn>
          <Sample><legend>示例</legend><output>5</output></Sample>
          <Places>
            <label htmlFor="places">小数位数(<u>D</u>):</label>
            <Spinner>
              <SpinValue id="places" defaultValue="0" />
              <SpinButtons><button aria-label="增加"><svg width="5" height="3"><path d="M0 3h5L2.500 0z" /></svg></button><button aria-label="减少"><Caret color="#000" /></button></SpinButtons>
            </Spinner>
          </Places>
          <CheckLine><input type="checkbox" /><span>使用千位分隔符(,)(<u>U</u>)</span></CheckLine>
          <Caption id="negative-label">负数(<u>N</u>):</Caption>
          <ListFrame $height={191}>
            <List role="listbox" aria-labelledby="negative-label">
              {negatives.map((n, i) => <Option key={i} role="option" $wide $on={n.on} $red={n.red} aria-selected={!!n.on}>{n.text}</Option>)}
            </List>
            <Track><Chevron /><Chevron down /></Track>
          </ListFrame>
        </DetailColumn>
      </Columns>
      <Note>数值格式用于一般数字的表示。货币和会计格式则提供货币值计算的专用格式。</Note>
    </Panel>
    <Actions><ActionButton $primary>确定</ActionButton><ActionButton>取消</ActionButton></Actions>
  </Dialog>
);

const Arrow = ({ x, y, angle, length }: { x: number; y: number; angle: number; length: number }) => (
  <g filter="url(#drop)">
    <path transform={`translate(${x} ${y}) rotate(${angle})`} d={`M0 0-26-8-22-2H${-length}a2 2 0 0 0 0 4H-22L-26 8z`} fill="#f00" stroke="#a00" strokeWidth=".6" />
  </g>
);

export default function App() {
  return (
    <>
      <GlobalStyle />
      <Window>
        <TitleBar>
          <Title>工作簿3.xlsx - Excel</Title>
          <TabBar>
            <RibbonTab $file>文件</RibbonTab>
            {ribbonTabs.map((t, i) => <RibbonTab key={t} $active={i === 0}>{t}</RibbonTab>)}
            <TellMe><BulbIcon /><input aria-label="告诉我" placeholder="告诉我您想要做什么..." /></TellMe>
          </TabBar>
        </TitleBar>

        <RibbonGroups />

        <Bars>
          <QuickBar>
            <QuickButton aria-label="保存"><SaveIcon /></QuickButton>
            <QuickButton $gap={24} aria-label="恢复"><UndoIcon redo /></QuickButton>
            <CaretButton $width={10} aria-label="恢复选项"><Caret color="#b4b4b4" /></CaretButton>
            <QuickButton $gap={15} aria-label="撤消"><UndoIcon /></QuickButton>
            <CaretButton $width={10} aria-label="撤消选项"><Caret /></CaretButton>
            <QuickButton $gap={18} aria-label="打印"><PrintIcon /></QuickButton>
            <QuickButton $gap={28} aria-label="打印预览"><PreviewIcon /></QuickButton>
            <QuickButton $gap={24} aria-label="自定义"><svg width="5" height="6"><path d="M0 0h5v1H0zM0 3h5L2.500 6z" fill="#f6f6f6" /></svg></QuickButton>
          </QuickBar>
          <FormulaBar>
            <NameBox><input aria-label="名称框" defaultValue="A1" /><Caret big /></NameBox>
            <Dots><svg width="2" height="12"><path d="M0 0h2v2H0zM0 5h2v2H0zM0 10h2v2H0z" fill="#aaa" /></svg></Dots>
            <FormulaTools>
              <button aria-label="取消输入"><svg width="12" height="11" viewBox="0 0 12 11" stroke="#c3c3c3" strokeWidth="2"><path d="M1 .5l10 10M11 .5l-10 10" /></svg></button>
              <button aria-label="输入"><svg width="13" height="11" viewBox="0 0 13 11" fill="none" stroke="#c3c3c3" strokeWidth="2.500"><path d="M1 6l3.500 3.500L12 1" /></svg></button>
              <button aria-label="插入函数"><svg width="14" height="15" viewBox="0 0 14 15" fill="none" stroke="#555" strokeWidth="1.500"><path d="M8 2C6.500.5 5.500 2 5 5L4 10c-.4 2.500-1.500 3.500-3 2.500M2.500 5.500H7" /><path d="M7 7.500c2-.5 2.500 4.500 5.500 4M13 7.500c-2 0-3.500 4.500-6 4" /></svg></button>
            </FormulaTools>
            <FormulaInput aria-label="编辑栏" defaultValue="5.4" />
          </FormulaBar>
        </Bars>

        <SheetArea>
          <Table>
            <colgroup><col style={{ width: 26 }} />{columns.map(([n, w]) => <col key={n} style={{ width: w }} />)}<col /></colgroup>
            <thead>
              <tr>
                <Corner><svg width="9" height="9"><path d="M9 0v9H0z" fill="#b4b4b4" /></svg></Corner>
                {columns.map(([n]) => <ColHead key={n} $on={n === 'A'}>{n}</ColHead>)}
                <ColHead />
              </tr>
            </thead>
            <tbody>
              {rowLabels.map((label, r) => (
                <tr key={r}>
                  <RowHead $on={r < 7}>{label}</RowHead>
                  {columns.map(([n]) => <Cell key={n} $on={n === 'A' && r > 0 && r < 7}>{n === 'A' ? values[r] : null}</Cell>)}
                  <Cell />
                </tr>
              ))}
            </tbody>
          </Table>
          <Selection />
        </SheetArea>

        <FormatDialog />

        <Annotations width="410" height="200" viewBox="340 240 410 200">
          <defs><filter id="drop" x="-30%" y="-30%" width="160%" height="180%"><feDropShadow dx="2" dy="3" stdDeviation="2" floodOpacity=".5" /></filter></defs>
          <Arrow x={411} y={261} angle={-38} length={83} />
          <Arrow x={411} y={340} angle={-46} length={56} />
          <Arrow x={682} y={393} angle={-145} length={59} />
          <path d="M538.500 291.500v16l3.700-3.500 2.600 6 2.400-1-2.600-6h5z" fill="#fff" stroke="#223" />
        </Annotations>

        <Watermark>
          <SwirlIcon />
          <div><MarkName>极光下载站</MarkName><MarkUrl>www.xz7.com</MarkUrl></div>
        </Watermark>
      </Window>
    </>
  );
}
